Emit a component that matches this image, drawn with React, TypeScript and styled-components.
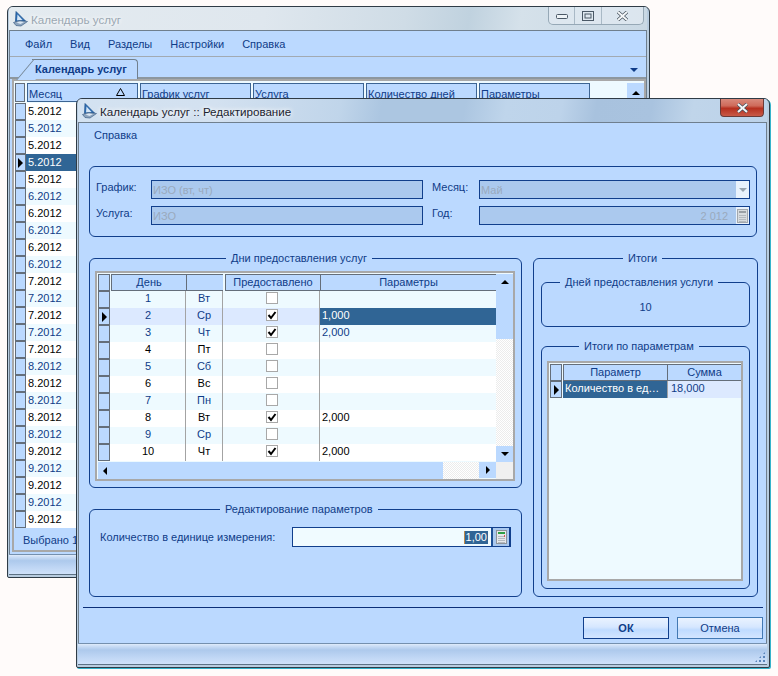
import styled, { createGlobalStyle } from "styled-components";

const months = [
  "5.2012", "5.2012", "5.2012", "5.2012", "5.2012",
  "6.2012", "6.2012", "6.2012", "6.2012", "6.2012",
  "7.2012", "7.2012", "7.2012", "7.2012", "7.2012",
  "8.2012", "8.2012", "8.2012", "8.2012", "8.2012",
  "9.2012", "9.2012", "9.2012", "9.2012", "9.2012",
];
const backColumns = ["График услуг", "Услуга", "Количество дней", "Параметры"];
const menuItems = ["Файл", "Вид", "Разделы", "Настройки", "Справка"];
const days = [
  { day: "1", week: "Вт", on: false, value: "" },
  { day: "2", week: "Ср", on: true, value: "1,000" },
  { day: "3", week: "Чт", on: true, value: "2,000" },
  { day: "4", week: "Пт", on: false, value: "" },
  { day: "5", week: "Сб", on: false, value: "" },
  { day: "6", week: "Вс", on: false, value: "" },
  { day: "7", week: "Пн", on: false, value: "" },
  { day: "8", week: "Вт", on: true, value: "2,000" },
  { day: "9", week: "Ср", on: false, value: "" },
  { day: "10", week: "Чт", on: true, value: "2,000" },
];

const ink = "#0f3c88";

const GlobalStyle = createGlobalStyle`
  html, body {
    margin: 0;
    padding: 0;
    background: #fffbfa;
  }
  * {
    box-sizing: border-box;
  }
`;

const Desktop = styled.div`
  position: relative;
  width: 778px;
  height: 676px;
  overflow: hidden;
  font-family: "Liberation Sans", Arial, sans-serif;
  font-size: 11px;
  color: ${ink};
`;
const Window = styled.div<{ $x: number; $y: number; $w: number; $h: number; $glow?: boolean }>`
  position: absolute;
  left: ${(p) => p.$x}px;
  top: ${(p) => p.$y}px;
  width: ${(p) => p.$w}px;
  height: ${(p) => p.$h}px;
  display: flex;
  flex-direction: column;
  padding: 0 2px 2px 1px;
  background: #b9cde0;
  border: 1px solid #2f3b46;
  border-radius: 6px 6px 2px 2px;
  overflow: hidden;
  box-shadow: ${(p) => (p.$glow ? "1px 1px 0 #36b4cc" : "none")};
`;
const TitleBar = styled.div<{ $active?: boolean }>`
  position: relative;
  flex: none;
  height: 23px;
  display: flex;
  align-items: center;
  gap: 3px;
  padding: 1px 0 0 4px;
  font-size: 11.6px;
  color: ${(p) => (p.$active ? "#1c2430" : "#9aa7b2")};
  text-shadow: 0 0 4px #fff, 0 0 6px rgba(255, 255, 255, 0.9);
  background: ${(p) =>
    p.$active
      ? "linear-gradient(100deg, #d3e2f1 0, #d3e1f0 20%, #c0d5ea 38%, #acc6e1 44%, #acc6e1 56%, #bfd5eb 62%, #bdd3ea 70%, #a8c2de 75%, #a9c3df 83%, #c0d5ea 89%, #bcd2e9 100%)"
      : "linear-gradient(100deg, #e4ebf0 0, #dfe7ee 40%, #cfdce6 62%, #c0d2df 72%, #d5e1ea 80%, #c9d8e4 100%)"};
`;
const Controls = styled.div`
  position: absolute;
  top: 0;
  right: 3px;
  width: 96px;
  height: 18px;
  display: grid;
  grid-template-columns: 25px 27px 1fr;
  background: rgba(225, 234, 242, 0.75);
  border: 1px solid #96a8b6;
  border-top: 0;
  border-radius: 0 0 5px 5px;
`;
const ControlCell = styled.div`
  display: flex;
  align-items: center;
  justify-content: center;
  border-left: 1px solid #a9b9c6;
  &:first-child {
    border-left: 0;
  }
`;
const CloseButton = styled.div`
  position: absolute;
  top: 0;
  right: 3px;
  width: 44px;
  height: 18px;
  display: flex;
  align-items: center;
  justify-content: center;
  background: linear-gradient(#d98a7c 0, #cf6a5a 40%, #b6301f 55%, #c85a48 100%);
  border: 1px solid #6b3a38;
  border-top: 0;
  border-radius: 0 0 4px 4px;
`;
const Body = styled.div`
  flex: 1;
  min-height: 0;
  display: flex;
  flex-direction: column;
  background: #bbd9ff;
  border: 1px solid #6f7f8e;
  border-bottom: 0;
  overflow: hidden;
`;
const StatusBar = styled.div<{ $h: number }>`
  position: relative;
  flex: none;
  height: ${(p) => p.$h}px;
  background: linear-gradient(#e0ecfb 0, #cfe0f7 8%, #adc9ec 30%, #bcd4f3 60%, #d0e2fa 100%);
  border-top: 1px solid #7590ae;
  border-bottom: 1px solid #5d7184;
`;
const Grip = styled.div`
  position: absolute;
  right: 1px;
  bottom: 1px;
  width: 12px;
  height: 12px;
  background: radial-gradient(circle, #5b86bb 1px, transparent 1.2px) 0 0 / 4px 4px;
  clip-path: polygon(100% 0, 100% 100%, 0 100%);
`;

// back window
const MenuBar = styled.div`
  flex: none;
  height: 25px;
  display: flex;
  align-items: center;
  gap: 18px;
  padding: 0 0 0 15px;
`;
const TabStrip = styled.div`
  position: relative;
  flex: none;
  height: 23px;
  display: flex;
  align-items: flex-end;
  padding-left: 22px;
  border-top: 1px solid #a2aab2;
  border-bottom: 2px solid #8d979f;
`;
const Tab = styled.div`
  position: relative;
  height: 20px;
  width: 106px;
  margin-bottom: -2px;
  padding: 3px 0 0 3px;
  background: #bbd9ff;
  font-weight: 700;
  font-size: 11px;
  color: ${ink};
  border: 1px solid #71808e;
  border-left: 0;
  border-bottom: 0;
  border-radius: 0 4px 0 0;
  &::before {
    content: "";
    position: absolute;
    left: -7px;
    top: -1px;
    width: 18px;
    height: 20px;
    background: #bbd9ff;
    border-left: 1px solid #71808e;
    border-top: 1px solid #71808e;
    transform: skewX(-40deg);
    z-index: 0;
  }
`;
const TabText = styled.span`
  position: relative;
  z-index: 1;
`;
const TabArrow = styled.div`
  position: absolute;
  right: 8px;
  top: 11px;
  width: 0;
  height: 0;
  border-left: 4px solid transparent;
  border-right: 4px solid transparent;
  border-top: 4px solid ${ink};
`;
const BackFrame = styled.div`
  flex: 1;
  min-height: 0;
  display: flex;
  flex-direction: column;
  margin: 0 0 2px 2px;
  border: 2px solid #a8a8a8;
  background: #fff;
`;
const BackHead = styled.div`
  flex: none;
  height: 22px;
  display: grid;
  grid-template-columns: 10px repeat(5, 111px) 1fr 17px;
  column-gap: 2px;
  padding: 2px 0 1px 1px;
  background: #eefaff;
`;
const BackHeadCell = styled.div`
  position: relative;
  padding: 3px 0 0 1px;
  background: #bbd9ff;
  border: 1px solid #3c6493;
  font-size: 11px;
  line-height: 14px;
  white-space: nowrap;
  overflow: hidden;
`;
const SortMark = styled.svg`
  position: absolute;
  right: 12px;
  top: 4px;
`;
const HeadCorner = styled.div`
  background: #bbd9ff;
  border: 1px solid #646e7a;
`;
const BackRows = styled.div`
  flex: 1;
  min-height: 0;
  overflow: hidden;
`;
const BackRow = styled.div<{ $alt?: boolean; $current?: boolean }>`
  height: 17px;
  display: flex;
  background: ${(p) => (p.$alt ? "#eefaff" : "#fff")};
  color: ${(p) => (p.$current ? "#fff" : p.$alt ? ink : "#000")};
`;
const RowHead = styled.div<{ $flush?: boolean }>`
  flex: none;
  width: ${(p) => (p.$flush ? 12 : 11)}px;
  height: 17px;
  margin-left: ${(p) => (p.$flush ? 0 : 1)}px;
  display: flex;
  align-items: center;
  justify-content: center;
  background: #bbd9ff;
  border: 1px solid #646e7a;
`;
const MonthCell = styled.div<{ $current?: boolean }>`
  flex: 1;
  padding-left: 2px;
  font-size: 11px;
  line-height: 16px;
  background: ${(p) => (p.$current ? "#306595" : "transparent")};
`;
const BackFooter = styled.div`
  flex: none;
  height: 22px;
  padding: 5px 0 0 9px;
  font-size: 11px;
  line-height: 15px;
  background: #bbd9ff;
  white-space: nowrap;
`;
const ScrollUp = styled.div`
  display: flex;
  align-items: center;
  justify-content: center;
  background: #bbd9ff;
`;
const ArrowGlyph = styled.i<{ $dir: "up" | "down" | "left" | "right"; $color?: string; $size?: number }>`
  display: block;
  width: 0;
  height: 0;
  border: ${(p) => p.$size ?? 4}px solid transparent;
  ${(p) => {
    const c = p.$color ?? "#000";
    if (p.$dir === "up") return `border-top: 0; border-bottom-color: ${c};`;
    if (p.$dir === "down") return `border-bottom: 0; border-top-color: ${c};`;
    if (p.$dir === "right") return `border-right: 0; border-left-color: ${c};`;
    return `border-left: 0; border-right-color: ${c};`;
  }}
`;

// dialog
const DialogMenu = styled.div`
  flex: none;
  height: 43px;
  padding: 5px 0 0 15px;
  font-size: 11px;
  line-height: 15px;
`;
const Content = styled.div`
  flex: none;
  display: flex;
  flex-direction: column;
  padding: 0 9px 0 10px;
`;
const GroupBox = styled.fieldset<{ $h: number }>`
  display: block;
  flex: none;
  min-width: 0;
  margin: 0;
  padding: 0;
  height: ${(p) => p.$h}px;
  border: 1px solid #113f8c;
  border-radius: 6px;
`;
const GroupTitle = styled.legend<{ $left: number }>`
  margin: 0 0 0 ${(p) => p.$left}px;
  padding: 0 5px;
  font-size: 11px;
  line-height: 14px;
  white-space: nowrap;
`;
const TopForm = styled.div`
  display: grid;
  grid-template-columns: 55px 272px 56px 271px;
  grid-auto-rows: 19px;
  row-gap: 7px;
  padding: 13px 0 0 6px;
  & > :nth-child(4n + 3) {
    padding-left: 9px;
  }
`;
const FieldLabel = styled.label`
  font-size: 11px;
  line-height: 15px;
`;
const Field = styled.div`
  display: flex;
  align-items: center;
  padding: 0 1px;
  background: #abc9ee;
  border: 1px solid #113f8c;
  color: #9aa9bd;
  font-size: 11px;
`;
const FieldText = styled.span`
  flex: 1;
  white-space: nowrap;
`;
const YearText = styled(FieldText)`
  text-align: right;
  padding-right: 8px;
`;
const FieldButton = styled.div`
  flex: none;
  width: 13px;
  height: 17px;
  display: flex;
  align-items: center;
  justify-content: center;
  background: #e9f2fc;
  margin-right: -1px;
`;
const Columns = styled.div`
  display: grid;
  grid-template-columns: 433px 225px;
  column-gap: 11px;
  margin-top: 14px;
`;
const LeftColumn = styled.div`
  display: flex;
  flex-direction: column;
  gap: 14px;
`;
const GridFrame = styled.div<{ $m: string; $h: number }>`
  margin: ${(p) => p.$m};
  height: ${(p) => p.$h}px;
  display: flex;
  flex-direction: column;
  padding: 1px 0 0 1px;
  background: #eefaff;
  border: 2px solid #a8a8a8;
  overflow: hidden;
`;
const DayRow = styled.div<{ $alt?: boolean; $current?: boolean; $head?: boolean }>`
  flex: none;
  display: grid;
  grid-template-columns: 12px 1px 75px 37px 2px 95px 176px;
  height: 17px;
  background: ${(p) => (p.$head ? "#eefaff" : p.$current ? "#dce9ff" : p.$alt ? "#eefaff" : "#fff")};
  color: ${(p) => (p.$current || p.$alt || p.$head ? ink : "#000")};
`;
const HeadCell = styled.div<{ $closed?: boolean }>`
  font-size: 11px;
  text-align: center;
  background: #bbd9ff;
  border: 1px solid #646e7a;
  border-right-width: ${(p) => (p.$closed ? 1 : 0)}px;
  line-height: 14px;
  white-space: nowrap;
  overflow: hidden;
`;
const Spacer = styled.div``;
const CenterCell = styled.div<{ $line?: boolean }>`
  font-size: 11px;
  display: flex;
  align-items: center;
  justify-content: center;
  padding-bottom: 3px;
  border-right: ${(p) => (p.$line ? "1px solid #a3a3a3" : "0")};
`;
const ValueCell = styled.div<{ $current?: boolean }>`
  font-size: 11px;
  line-height: 15px;
  padding-left: 2px;
  background: ${(p) => (p.$current ? "#306595" : "transparent")};
  color: ${(p) => (p.$current ? "#fff" : "inherit")};
`;
const CheckBox = styled.div`
  width: 12px;
  height: 12px;
  background: #fff;
  border: 1px solid #a8a8a8;
  display: flex;
  align-items: center;
  justify-content: center;
`;
const TableArea = styled.div`
  flex: none;
  display: grid;
  grid-template-columns: 398px 17px;
  height: 188px;
`;
const RowsColumn = styled.div`
  display: flex;
  flex-direction: column;
  background: #eefaff;
`;
const VScroll = styled.div`
  display: flex;
  flex-direction: column;
`;
const ScrollButton = styled.div`
  flex: none;
  height: 16px;
  display: flex;
  align-items: center;
  justify-content: center;
  background: #bbd9ff;
`;
const ScrollThumb = styled.div`
  flex: none;
  height: 49px;
  background: #bbd9ff;
`;
const Dither = styled.div`
  flex: 1;
  background: repeating-conic-gradient(#ececec 0 25%, #fff 0 50%) 0 0 / 2px 2px;
`;
const HScroll = styled.div`
  flex: none;
  height: 17px;
  display: grid;
  grid-template-columns: 345px 36px 17px 17px;
`;
const HThumb = styled.div`
  background: #bbd9ff;
  display: flex;
  align-items: center;
  padding-left: 5px;
`;
const HCorner = styled.div`
  background: #f0f0f0;
`;
const EditRow = styled.div`
  display: flex;
  align-items: center;
  height: 20px;
  margin: 11px 10px 0 10px;
  font-size: 11px;
`;
const EditLabel = styled.span`
  flex: none;
  width: 192px;
  white-space: nowrap;
`;
const EditField = styled.div`
  flex: 1;
  height: 20px;
  display: flex;
  align-items: center;
  background: #f0fbff;
  border: 1px solid #113f8c;
  border-right-width: 2px;
`;
const EditValue = styled.div`
  flex: 1;
  display: flex;
  justify-content: flex-end;
  padding-right: 3px;
`;
const Selected = styled.span`
  display: block;
  height: 13px;
  line-height: 13px;
  padding: 0 1px;
  background: #306595;
  color: #fff;
  font-size: 11px;
  border-left: 1px solid #c08a4a;
`;
const CalcButton = styled.div`
  flex: none;
  width: 18px;
  height: 18px;
  display: flex;
  align-items: center;
  justify-content: center;
  background: #a9c8ee;
  border-left: 2px solid #1c4f94;
`;
const TotalsInner = styled.div`
  display: flex;
  flex-direction: column;
  gap: 12px;
  padding: 10px 7px 0;
`;
const TotalValue = styled.div`
  margin-top: 12px;
  text-align: center;
  font-size: 11px;
`;
const SumRow = styled.div`
  flex: none;
  height: 17px;
  display: grid;
  grid-template-columns: 12px 1px 104px 75px;
  line-height: 15px;
`;
const SumName = styled.div`
  padding-left: 2px;
  background: #306595;
  color: #fff;
  font-size: 11px;
  white-space: nowrap;
`;
const SumValue = styled.div`
  padding-left: 3px;
  background: #dce9ff;
  font-size: 11px;
  border-right: 1px solid #a3a3a3;
  border-left: 1px solid #a3a3a3;
`;
const Divider = styled.div`
  flex: none;
  height: 1px;
  margin: 10px 3px 0 4px;
  background: #0c2f78;
`;
const Buttons = styled.div`
  flex: none;
  display: flex;
  justify-content: flex-end;
  gap: 8px;
  padding: 9px 3px 0 0;
`;
const Button = styled.div<{ $primary?: boolean }>`
  width: 86px;
  height: 22px;
  display: flex;
  align-items: center;
  justify-content: center;
  font-size: 11px;
  font-weight: ${(p) => (p.$primary ? 700 : 400)};
  color: ${ink};
  background: linear-gradient(#eaf3ff 0, #d6e7ff 45%, #bfdbff 60%, #d3e5ff 100%);
  border: 1px solid ${(p) => (p.$primary ? "#113f8c" : "#4379b3")};
`;

function Logo() {
  return (
    <svg width="15" height="16" viewBox="0 0 15 16">
      <path d="M3 0.5 L12.5 10 L2.5 10.5 Z" fill="#2f6fb5" stroke="#1b4d86" strokeWidth="0.7" />
      <path d="M4.5 3.5 L9.5 9 L4 9.5 Z" fill="#d5e6f6" />
      <path d="M0.5 11.5 L6 9.5 L14.5 10.5 L8 15 L3 14.5 Z" fill="#8da4bd" stroke="#3f6087" strokeWidth="0.7" />
      <path d="M3.5 11.5 L7 10.5 L11 11 L7.5 13 Z" fill="#dbe6f2" />
    </svg>
  );
}

function CalcIcon({ muted }: { muted?: boolean }) {
  return (
    <svg width="11" height="14" viewBox="0 0 11 14">
      <rect x="0.5" y="0.5" width="10" height="13" fill={muted ? "#d8dcdf" : "#e6e8ea"} stroke={muted ? "#a3a8ad" : "#8d949b"} />
      <rect x="2" y="2" width="7" height="2" fill={muted ? "#9aa0a5" : "#2f9e44"} />
      <path d="M2 6.5h7M2 8.5h7M2 10.5h7M2 12.5h7" stroke="#b5babf" />
      {!muted && <rect x="8" y="5" width="1" height="2" fill="#d9534f" />}
    </svg>
  );
}

function CheckMark() {
  return (
    <svg width="10" height="10" viewBox="0 0 10 10">
      <path d="M1.5 5 L4 8 L8.5 2" fill="none" stroke="#000" strokeWidth="2" />
    </svg>
  );
}

function CloseGlyph() {
  return (
    <svg width="13" height="10" viewBox="0 0 13 10">
      <path d="M2 1 L11 9 M11 1 L2 9" stroke="#44505c" strokeWidth="3.4" />
      <path d="M2 1 L11 9 M11 1 L2 9" stroke="#f4f6f8" strokeWidth="2" />
    </svg>
  );
}

function App() {
  return (
    <Desktop>
      <GlobalStyle />
      <Window $x={7} $y={6} $w={643} $h={572}>
        <TitleBar>
          <Logo />
          Календарь услуг
          <Controls>
            <ControlCell>
              <svg width="12" height="6" viewBox="0 0 12 6">
                <rect x="0.5" y="1.5" width="11" height="4" rx="1" fill="#eef3f7" stroke="#4a5866" />
              </svg>
            </ControlCell>
            <ControlCell>
              <svg width="12" height="10" viewBox="0 0 12 10">
                <rect x="0.5" y="0.5" width="11" height="9" fill="#dfe8f0" stroke="#4a5866" />
                <rect x="3" y="3" width="6" height="4" fill="none" stroke="#4a5866" />
              </svg>
            </ControlCell>
            <ControlCell>
              <CloseGlyph />
            </ControlCell>
          </Controls>
        </TitleBar>
        <Body>
          <MenuBar>
            {menuItems.map((item) => (
              <span key={item}>{item}</span>
            ))}
          </MenuBar>
          <TabStrip>
            <Tab>
              <TabText>Календарь услуг</TabText>
            </Tab>
            <TabArrow />
          </TabStrip>
          <BackFrame>
            <BackHead>
              <HeadCorner />
              <BackHeadCell>
                Месяц
                <SortMark width="9" height="8" viewBox="0 0 9 8">
                  <path d="M4.5 0.5 L8.5 7.5 L0.5 7.5 Z" fill="none" stroke="#000" />
                </SortMark>
              </BackHeadCell>
              {backColumns.map((col) => (
                <BackHeadCell key={col}>{col}</BackHeadCell>
              ))}
              <div />
              <ScrollUp>
                <ArrowGlyph $dir="up" />
              </ScrollUp>
            </BackHead>
            <BackRows>
              {months.map((m, i) => (
                <BackRow key={i} $alt={i % 2 === 1 && i !== 3} $current={i === 3}>
                  <RowHead>{i === 3 && <ArrowGlyph $dir="right" $size={5} />}</RowHead>
                  <MonthCell $current={i === 3}>{m}</MonthCell>
                </BackRow>
              ))}
            </BackRows>
            <BackFooter>Выбрано 1</BackFooter>
          </BackFrame>
        </Body>
        <StatusBar $h={21} />
      </Window>

      <Window $x={76} $y={98} $w={694} $h={570} $glow>
        <TitleBar $active>
          <Logo />
          Календарь услуг :: Редактирование
          <CloseButton>
            <CloseGlyph />
          </CloseButton>
        </TitleBar>
        <Body>
          <DialogMenu>Справка</DialogMenu>
          <Content>
            <GroupBox $h={71}>
              <TopForm>
                <FieldLabel>График:</FieldLabel>
                <Field>
                  <FieldText>ИЗО (вт, чт)</FieldText>
                </Field>
                <FieldLabel>Месяц:</FieldLabel>
                <Field>
                  <FieldText>Май</FieldText>
                  <FieldButton>
                    <ArrowGlyph $dir="down" $color="#9aa5b0" />
                  </FieldButton>
                </Field>
                <FieldLabel>Услуга:</FieldLabel>
                <Field>
                  <FieldText>ИЗО</FieldText>
                </Field>
                <FieldLabel>Год:</FieldLabel>
                <Field>
                  <YearText>2 012</YearText>
                  <FieldButton>
                    <CalcIcon muted />
                  </FieldButton>
                </Field>
              </TopForm>
            </GroupBox>
            <Columns>
              <LeftColumn>
                <GroupBox $h={237}>
                  <GroupTitle $left={136}>Дни предоставления услуг</GroupTitle>
                  <GridFrame $m="6px 6px 0 5px" $h={210}>
                    <TableArea>
                      <RowsColumn>
                        <DayRow $head>
                          <HeadCorner />
                          <Spacer />
                          <HeadCell>День</HeadCell>
                          <HeadCell />
                          <Spacer />
                          <HeadCell>Предоставлено</HeadCell>
                          <HeadCell>Параметры</HeadCell>
                        </DayRow>
                        {days.map((d, i) => (
                          <DayRow key={d.day} $alt={i % 2 === 0} $current={i === 1}>
                            <RowHead $flush>
                              {i === 1 && <ArrowGlyph $dir="right" $size={5} />}
                            </RowHead>
                            <Spacer />
                            <CenterCell $line>{d.day}</CenterCell>
                            <CenterCell $line>{d.week}</CenterCell>
                            <Spacer />
                            <CenterCell $line>
                              <CheckBox>{d.on && <CheckMark />}</CheckBox>
                            </CenterCell>
                            <ValueCell $current={i === 1}>{d.value}</ValueCell>
                          </DayRow>
                        ))}
                      </RowsColumn>
                      <VScroll>
                        <ScrollButton>
                          <ArrowGlyph $dir="up" />
                        </ScrollButton>
                        <ScrollThumb />
                        <Dither />
                        <ScrollButton>
                          <ArrowGlyph $dir="down" />
                        </ScrollButton>
                      </VScroll>
                    </TableArea>
                    <HScroll>
                      <HThumb>
                        <ArrowGlyph $dir="left" />
                      </HThumb>
                      <Dither />
                      <ScrollButton>
                        <ArrowGlyph $dir="right" />
                      </ScrollButton>
                      <HCorner />
                    </HScroll>
                  </GridFrame>
                </GroupBox>
                <GroupBox $h={95}>
                  <GroupTitle $left={130}>Редактирование параметров</GroupTitle>
                  <EditRow>
                    <EditLabel>Количество в единице измерения:</EditLabel>
                    <EditField>
                      <EditValue>
                        <Selected>1,00</Selected>
                      </EditValue>
                      <CalcButton>
                        <CalcIcon />
                      </CalcButton>
                    </EditField>
                  </EditRow>
                </GroupBox>
              </LeftColumn>
              <GroupBox $h={346}>
                <GroupTitle $left={89}>Итоги</GroupTitle>
                <TotalsInner>
                  <GroupBox $h={52}>
                    <GroupTitle $left={18}>Дней предоставления услуги</GroupTitle>
                    <TotalValue>10</TotalValue>
                  </GroupBox>
                  <GroupBox $h={250}>
                    <GroupTitle $left={37}>Итоги по параметрам</GroupTitle>
                    <GridFrame $m="8px 6px 0 5px" $h={220}>
                      <SumRow>
                        <HeadCorner />
                        <Spacer />
                        <HeadCell>Параметр</HeadCell>
                        <HeadCell $closed>Сумма</HeadCell>
                      </SumRow>
                      <SumRow>
                        <RowHead $flush>
                          <ArrowGlyph $dir="right" $size={5} />
                        </RowHead>
                        <Spacer />
                        <SumName>Количество в ед…</SumName>
                        <SumValue>18,000</SumValue>
                      </SumRow>
                    </GridFrame>
                  </GroupBox>
                </TotalsInner>
              </GroupBox>
            </Columns>
          </Content>
          <Divider />
          <Buttons>
            <Button $primary>ОК</Button>
            <Button>Отмена</Button>
          </Buttons>
        </Body>
        <StatusBar $h={22}>
          <Grip />
        </StatusBar>
      </Window>
    </Desktop>
  );
}

export default App;
